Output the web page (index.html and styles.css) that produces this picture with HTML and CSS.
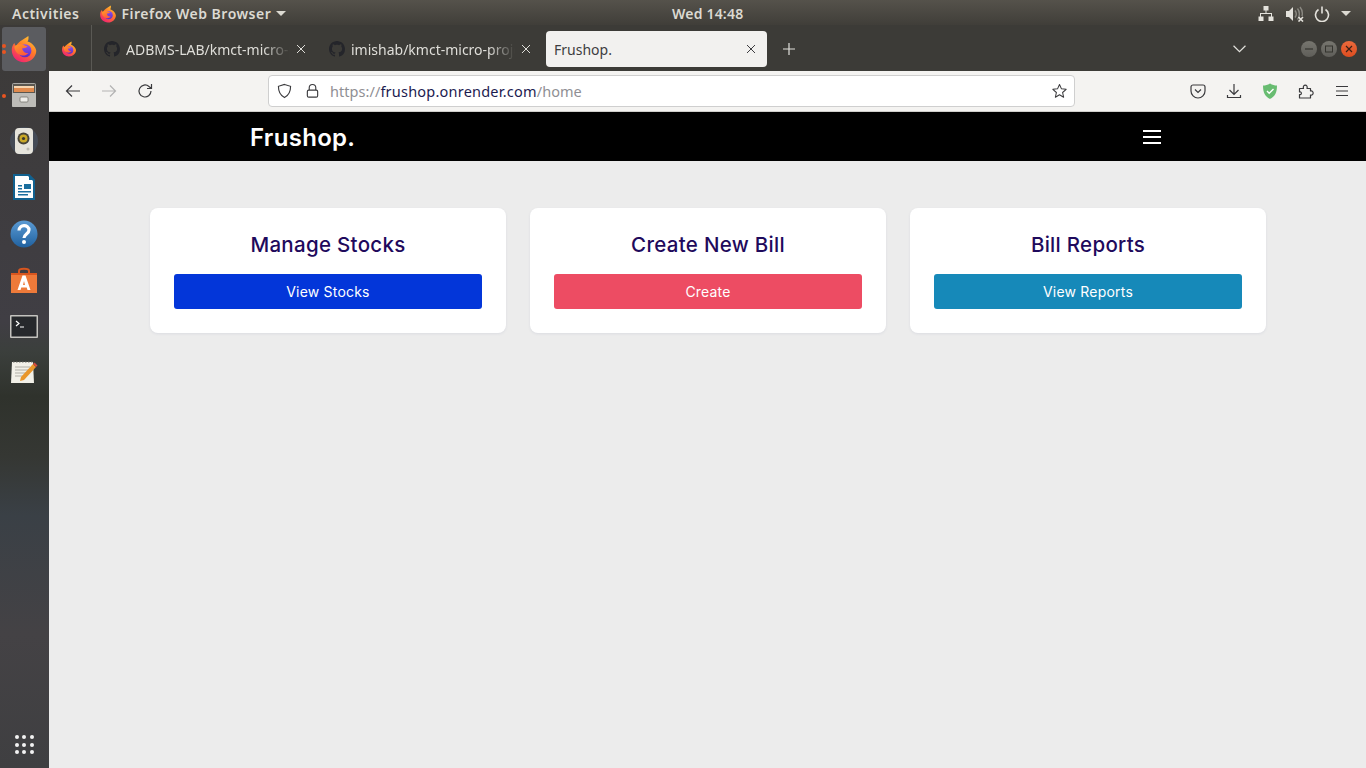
FILE: index.html
```html
<!DOCTYPE html>
<html lang="en">
<head>
<meta charset="utf-8">
<title>Frushop.</title>
<link rel="stylesheet" href="styles.css">
</head>
<body>
<svg class="defs" width="0" height="0" aria-hidden="true">
  <defs>
    <linearGradient id="ffa" x1="0.8" y1="0.05" x2="0.25" y2="0.95"><stop offset="0" stop-color="#ffc233"/><stop offset="0.45" stop-color="#ff7a28"/><stop offset="1" stop-color="#f2256f"/></linearGradient>
    <linearGradient id="ffb" x1="0.5" y1="0" x2="0.5" y2="1"><stop offset="0" stop-color="#8f52ec"/><stop offset="1" stop-color="#5b2cc6"/></linearGradient>
    <linearGradient id="ffc" x1="0" y1="0" x2="0.6" y2="1"><stop offset="0" stop-color="#ff9b26"/><stop offset="1" stop-color="#ff5a3c"/></linearGradient>
    <symbol id="ff" viewBox="0 0 32 32">
      <path fill="url(#ffa)" d="M21 1c.5 3 0 5-1 6.500C25 9 29 13 30 18c0 7-6 13-14 13S2 25 2 17c0-3 1-6 3-8 .5 1.500 1 2.500 2 3.500C9 8 14 5.500 21 1z"/>
      <circle cx="17" cy="18" r="7.500" fill="url(#ffb)"/>
      <path fill="url(#ffc)" d="M5 13c3-2.500 7-3 10-2 2 .7 3 1.600 5 1.600-1 2-3.500 3-6 2.400 0 3 3 6 7 5.500-2.500 3-7.500 4-11 1.500-3-2-5-5-5-9z"/>
    </symbol>
    <symbol id="gh" viewBox="0 0 16 16">
      <path fill="#24252a" d="M8 0C3.580 0 0 3.580 0 8c0 3.540 2.290 6.530 5.470 7.590.4.070.55-.17.55-.38 0-.19-.01-.82-.01-1.490-2.010.37-2.530-.49-2.690-.94-.09-.23-.48-.94-.82-1.130-.28-.15-.68-.52-.01-.53.63-.01 1.080.58 1.230.82.720 1.210 1.870.87 2.330.66.070-.52.280-.87.510-1.070-1.780-.2-3.640-.89-3.640-3.950 0-.87.310-1.590.820-2.150-.08-.2-.36-1.020.08-2.120 0 0 .67-.21 2.200.82.640-.18 1.320-.27 2-.27s1.360.09 2 .27c1.530-1.040 2.200-.82 2.200-.82.440 1.100.16 1.920.08 2.120.51.560.82 1.270.82 2.150 0 3.070-1.870 3.750-3.650 3.950.29.250.54.730.54 1.480 0 1.070-.01 1.930-.01 2.200 0 .21.150.46.550.38A8.010 8.010 0 0 0 16 8c0-4.420-3.580-8-8-8z"/>
    </symbol>
    <symbol id="x" viewBox="0 0 10 10"><path d="M1 1l8 8M9 1l-8 8" fill="none" stroke="currentColor" stroke-width="1"/></symbol>
  </defs>
</svg>

<header class="topbar">
  <div class="top-left">
    <span class="activities">Activities</span>
    <span class="app-menu">
      <svg class="ico-18"><use href="#ff"/></svg>
      <span>Firefox Web Browser</span>
      <i class="caret"></i>
    </span>
  </div>
  <div class="clock">Wed 14:48</div>
  <div class="tray">
    <svg class="tray-ico net" viewBox="0 0 16 16"><path fill="#e4e2dc" d="M5.500 0h5v4.500h-2V7H14v3.500h1.500V15H10.500v-4.500H13V8H3v2.500h2.500V15H.500v-4.500H2V7h5.500V4.500h-2z"/></svg>
    <svg class="tray-ico sound" viewBox="0 0 18 16"><path fill="#e4e2dc" d="M0 5h3l4-4v14l-4-4H0z"/><path fill="none" stroke="#8b8982" stroke-width="1.400" d="M9 4.500c1.500 2 1.500 5 0 7M11.500 2.500c2.500 3 2.500 8 0 11M14 1c2.500 3 2.500 7 2 9"/><path stroke="#e4e2dc" stroke-width="1.600" d="M12.500 11l4.500 4.500M17 11l-4.500 4.500"/></svg>
    <svg class="tray-ico" viewBox="0 0 16 16"><path fill="none" stroke="#e4e2dc" stroke-width="1.600" d="M4.500 3.500a6.500 6.500 0 1 0 7 0M8 .5v7"/></svg>
    <i class="caret"></i>
  </div>
</header>

<div class="desktop">
  <nav class="dock">
    <div class="dock-list">
      <div class="dock-item active"><i class="pip one"></i><i class="pip two"></i><svg class="dock-ico"><use href="#ff"/></svg></div>
      <div class="dock-item"><i class="pip single"></i>
        <svg class="dock-ico" viewBox="0 0 28 28"><rect x="2" y="2" width="24" height="24" rx="2" fill="#a9a8a4"/><rect x="3" y="3" width="22" height="9" fill="#5b5750"/><rect x="4" y="5" width="20" height="6" fill="#e08a4e"/><rect x="4" y="5" width="20" height="2" fill="#f6d5b0"/><rect x="2" y="12" width="24" height="14" rx="1" fill="#bdbcb8"/><rect x="10" y="16" width="8" height="5" rx="1" fill="#efeeea" stroke="#77756f" stroke-width=".8"/></svg>
      </div>
      <div class="dock-item">
        <svg class="dock-ico" viewBox="0 0 28 28"><circle cx="14" cy="14" r="14" fill="#4a5568" opacity=".6"/><rect x="5" y="1" width="18" height="26" rx="4" fill="#e6e4dc"/><circle cx="13.500" cy="11.500" r="6" fill="#47443a"/><circle cx="13.500" cy="11.500" r="4" fill="#c9a827"/><circle cx="13.500" cy="11.500" r="1.600" fill="#3a382f"/><circle cx="18" cy="22" r="1.500" fill="#bcbab2"/></svg>
      </div>
      <div class="dock-item">
        <svg class="dock-ico" viewBox="0 0 28 28"><path fill="#11618f" d="M3 1h16l6 6v20H3z"/><path fill="#fff" d="M5 3h13l5 5v17H5z"/><path fill="#11618f" d="M19 1l6 6h-6z"/><path fill="#1a6e9e" d="M8 12h4v1.500H8zM8 15h4v1.500H8zM14 11h7v5h-7zM8 18h13v1.500H8zM8 21h10v1.500H8z"/></svg>
      </div>
      <div class="dock-item">
        <svg class="dock-ico" viewBox="0 0 28 28"><defs><linearGradient id="hb" x1="0" y1="0" x2="0" y2="1"><stop offset="0" stop-color="#5b9bd4"/><stop offset="1" stop-color="#20619f"/></linearGradient></defs><circle cx="14" cy="14" r="13.500" fill="url(#hb)"/><path fill="none" stroke="#fff" stroke-width="3.200" d="M9 10.500c0-6.500 10-6.500 10-.5 0 4-5 4-5 8"/><circle cx="14" cy="22" r="2" fill="#fff"/></svg>
      </div>
      <div class="dock-item">
        <svg class="dock-ico" viewBox="0 0 28 28"><path fill="none" stroke="#d8561f" stroke-width="2" d="M9 8V5c0-3 10-3 10 0v3"/><path fill="#ee7a3a" d="M1 7h26v20H1z"/><path fill="#d8561f" d="M1 7h26v2H1z"/><path fill="#fff" d="M12.500 9.500h3L20.500 24h-3l-.8-2.500h-5.400L10.500 24h-3zM13 19h2l-1-4z"/></svg>
      </div>
      <div class="dock-item">
        <svg class="dock-ico" viewBox="0 0 28 28"><rect x="0" y="3" width="28" height="23" rx="1" fill="#c4c3bf"/><rect x="1.500" y="4.500" width="25" height="20" fill="#26282c"/><path fill="none" stroke="#fff" stroke-width="1.200" d="M6 9l3 2.500L6 14M10 15h4"/></svg>
      </div>
      <div class="dock-item">
        <svg class="dock-ico" viewBox="0 0 28 28"><path fill="#f2f0e8" d="M2 4h21l1 21H1z"/><path stroke="#6d6b66" stroke-width="1.200" stroke-dasharray="1.500 1.500" d="M3 4h20"/><path stroke="#b0aea6" d="M5 9h15M5 12h14M5 15h11M5 18h9"/><path fill="#e9962a" d="M23 6l3 3-12 13-4 1 1-4z"/><path fill="#d64a3c" d="M23 6l1.500-1.500 3 3L26 9z"/></svg>
      </div>
    </div>
    <div class="apps-grid"><i></i><i></i><i></i><i></i><i></i><i></i><i></i><i></i><i></i></div>
  </nav>

  <main class="browser">
    <div class="tabbar">
      <div class="tab pinned"><svg class="ico-16"><use href="#ff"/></svg></div>
      <div class="tab bg">
        <svg class="ico-16"><use href="#gh"/></svg>
        <span class="tab-label">ADBMS-LAB/kmct-micro-p</span>
        <svg class="tab-x"><use href="#x"/></svg>
      </div>
      <div class="tab bg">
        <svg class="ico-16"><use href="#gh"/></svg>
        <span class="tab-label">imishab/kmct-micro-proje</span>
        <svg class="tab-x"><use href="#x"/></svg>
      </div>
      <div class="tab current">
        <span class="tab-label plain">Frushop.</span>
        <svg class="tab-x"><use href="#x"/></svg>
      </div>
      <svg class="plus" viewBox="0 0 12 12"><path d="M6 0v12M0 6h12" stroke="#e2e1dc" stroke-width="1.200" fill="none"/></svg>
      <div class="tabbar-right">
        <svg class="chev" viewBox="0 0 12 7"><path d="M.5.500L6 6l5.500-5.500" fill="none" stroke="#e2e1dc" stroke-width="1.100"/></svg>
        <div class="win-btns">
          <span class="win-btn"><svg viewBox="0 0 8 8"><path d="M0 4h8" stroke="#35342f" stroke-width="1.200"/></svg></span>
          <span class="win-btn"><svg viewBox="0 0 8 8"><rect x=".5" y="1" width="7" height="6" fill="none" stroke="#35342f"/></svg></span>
          <span class="win-btn close"><svg viewBox="0 0 8 8"><path d="M1 1l6 6M7 1L1 7" stroke="#3a2016" stroke-width="1.200"/></svg></span>
        </div>
      </div>
    </div>

    <div class="toolbar">
      <div class="nav-btns">
        <svg class="tb-ico" viewBox="0 0 16 16"><path d="M15 8H1.500M7 2.500L1.500 8 7 13.500" fill="none" stroke="#3a3a3d" stroke-width="1.200"/></svg>
        <svg class="tb-ico" viewBox="0 0 16 16"><path d="M1 8h13.500M9 2.500L14.500 8 9 13.500" fill="none" stroke="#b3b3b3" stroke-width="1.200"/></svg>
        <svg class="tb-ico" viewBox="0 0 16 16"><path d="M14 8a6 6 0 1 1-2-4.500l2.500 2M14.500 1v4.500H10" fill="none" stroke="#3a3a3d" stroke-width="1.200"/></svg>
      </div>
      <div class="urlbar">
        <svg class="url-ico shield" viewBox="0 0 16 16"><path d="M8 1l6.500 2c0 6-1.500 9.500-6.500 12C3 12.500 1.500 9 1.500 3z" fill="none" stroke="#3a3a3d" stroke-width="1.200"/></svg>
        <svg class="url-ico lock" viewBox="0 0 16 16"><path d="M4.500 7V4.500a3.500 3.500 0 0 1 7 0V7" fill="none" stroke="#3a3a3d" stroke-width="1.200"/><rect x="2.500" y="7" width="11" height="7.500" rx="1.500" fill="none" stroke="#3a3a3d" stroke-width="1.200"/></svg>
        <span class="url"><span class="dim">https://</span><span class="host">frushop.onrender.com</span><span class="dim">/home</span></span>
        <svg class="url-ico star" viewBox="0 0 16 16"><path d="M8 1l2.100 4.700 5 .5-3.800 3.400 1.100 5L8 12l-4.400 2.600 1.100-5L.9 6.200l5-.5z" fill="none" stroke="#3a3a3d" stroke-width="1.100" stroke-linejoin="round"/></svg>
      </div>
      <div class="tools">
        <svg class="tb-ico" viewBox="0 0 16 16"><path d="M3 2h10a2 2 0 0 1 2 2v4a7 7 0 0 1-14 0V4a2 2 0 0 1 2-2z" fill="none" stroke="#3a3a3d" stroke-width="1.200"/><path d="M5 6.500L8 9.500l3-3" fill="none" stroke="#3a3a3d" stroke-width="1.200"/></svg>
        <svg class="tb-ico" viewBox="0 0 16 16"><path d="M8 1v10M3.500 7L8 11.500 12.500 7M1.500 12v2.500h13V12" fill="none" stroke="#3a3a3d" stroke-width="1.200"/></svg>
        <svg class="tb-ico" viewBox="0 0 16 16"><path d="M8 .5c2.500 1.500 4.500 2 7 2 0 7-2 11-7 13.500C3 13.500 1 9.500 1 2.500c2.500 0 4.500-.5 7-2z" fill="#68bc71"/><path d="M5 8l2.200 2.200L11.500 6" fill="none" stroke="#fff" stroke-width="1.400"/></svg>
        <svg class="tb-ico" viewBox="0 0 16 16"><path d="M1.500 5.500H5.500C4 1 10.500 1 9 5.500h3.500V8c3.500-1 3.500 5 0 4v3h-11v-3.500c2.500 1 2.500-3.500 0-2.500z" fill="none" stroke="#3a3a3d" stroke-width="1.200" stroke-linejoin="round"/></svg>
        <svg class="tb-ico" viewBox="0 0 16 16"><path d="M2 3.500h12M2 8h12M2 12.500h12" fill="none" stroke="#3a3a3d" stroke-width="1.200"/></svg>
      </div>
    </div>

    <div class="page">
      <div class="navbar">
        <span class="brand">Frushop.</span>
        <span class="burger"><i></i><i></i><i></i></span>
      </div>
      <div class="cards">
        <section class="card">
          <h2>Manage Stocks</h2>
          <a class="btn blue">View Stocks</a>
        </section>
        <section class="card">
          <h2>Create New Bill</h2>
          <a class="btn red">Create</a>
        </section>
        <section class="card">
          <h2>Bill Reports</h2>
          <a class="btn teal">View Reports</a>
        </section>
      </div>
    </div>
  </main>
</div>
</body>
</html>
```
FILE: styles.css
```css
* { box-sizing: border-box; }
html, body { margin: 0; height: 100%; overflow: hidden; }
body {
  width: 1366px;
  height: 768px;
  display: flex;
  flex-direction: column;
  font-family: "Noto Sans", sans-serif;
  background: #ececec;
}
.defs { position: absolute; }
i { display: block; }

/* Top bar */
.topbar {
  height: 25px;
  flex: none;
  display: grid;
  grid-template-columns: 660px auto 1fr;
  align-items: center;
  padding: 2px 12px 0;
  background: linear-gradient(#55524b, #403e39);
  color: #dcdad2;
  font-size: 14px;
  font-weight: 600;
  letter-spacing: 0.5px;
}
.top-left { display: flex; align-items: center; gap: 20px; }
.app-menu { display: flex; align-items: center; gap: 4px; }
.ico-18 { width: 18px; height: 18px; }
.caret {
  width: 0;
  height: 0;
  border-left: 5px solid transparent;
  border-right: 5px solid transparent;
  border-top: 5px solid #dcdad2;
  margin-left: 1px;
}
.clock { letter-spacing: 0.2px; }
.tray { display: flex; align-items: center; justify-content: flex-end; gap: 10px; padding-right: 3px; }
.tray-ico { width: 16px; height: 16px; }
.tray-ico.net { margin-right: 2px; }
.tray-ico.sound { width: 18px; }

/* Dock */
.desktop { flex: 1; display: flex; min-height: 0; }
.dock {
  width: 49px;
  flex: none;
  display: flex;
  flex-direction: column;
  justify-content: space-between;
  align-items: center;
  padding: 2px 1px 14px 0;
  background: linear-gradient(#3c3a38 0, #403e44 40%, #3b3f3c 44%, #2f322c 50%, #353733 58%, #3a4046 66%, #444245 82%, #3f3f41 100%);
}
.dock-list { display: flex; flex-direction: column; gap: 2.14px; align-items: center; }
.dock-item {
  position: relative;
  width: 44px;
  height: 44px;
  display: flex;
  align-items: center;
  justify-content: center;
  border-radius: 3px;
}
.dock-item.active { background: #5b5c60; }
.dock-ico { width: 28px; height: 28px; }
.pip {
  position: absolute;
  left: 0;
  width: 4px;
  height: 4px;
  border-radius: 50%;
  background: #e95420;
}
.pip.one { top: 17px; }
.pip.two { top: 23px; }
.pip.single { top: 21px; }
.apps-grid {
  display: grid;
  grid-template-columns: repeat(3, 4px);
  gap: 3.500px;
}
.apps-grid i { width: 4px; height: 4px; border-radius: 50%; background: #f2f2f2; }

/* Browser */
.browser { flex: 1; min-width: 0; display: flex; flex-direction: column; }
.tabbar {
  height: 46px;
  flex: none;
  display: flex;
  align-items: center;
  background: #3c3b37;
  color: #dfded9;
  font-size: 14px;
}
.tab { height: 36px; display: flex; align-items: center; margin-top: 2px; }
.pinned {
  width: 43px;
  height: 46px;
  margin-top: 0;
  padding: 2px 0 0 12px;
  border-right: 1px solid #5a5954;
}
.ico-16 { width: 16px; height: 16px; flex: none; }
.tab.bg { width: 225px; padding: 0 11px 0 12px; gap: 6px; }
.tab-label {
  flex: 1;
  min-width: 0;
  white-space: nowrap;
  -webkit-mask-image: linear-gradient(to right, #000 84%, transparent 100%);
  mask-image: linear-gradient(to right, #000 84%, transparent 100%);
}
.tab-label.plain { -webkit-mask-image: none; mask-image: none; }
.tab-x { width: 10px; height: 10px; flex: none; color: #dfded9; }
.tab.current {
  width: 221px;
  margin-left: 4px;
  padding: 0 11px 0 8px;
  background: #f2f1ef;
  color: #3d3d40;
  border-radius: 4px;
}
.current .tab-x { color: #3d3d40; }
.plus { width: 12px; height: 12px; margin: 2px 0 0 16px; }
.tabbar-right {
  flex: 1;
  display: flex;
  align-items: center;
  justify-content: flex-end;
  padding: 2px 9px 0 0;
  gap: 55px;
}
.chev { width: 13px; height: 8px; }
.win-btns { display: flex; gap: 4px; }
.win-btn {
  width: 16px;
  height: 16px;
  border-radius: 50%;
  background: linear-gradient(#77766f, #5f5e59);
  display: flex;
  align-items: center;
  justify-content: center;
}
.win-btn svg { width: 8px; height: 8px; }
.win-btn.close { background: linear-gradient(#ec6a3c, #dd4d20); }

/* Toolbar */
.toolbar {
  height: 41px;
  flex: none;
  display: flex;
  align-items: center;
  background: #f4f3f1;
  border-bottom: 1px solid #cfcecb;
  padding: 0 16px;
}
.tb-ico { width: 16px; height: 16px; flex: none; }
.nav-btns { display: flex; gap: 20px; margin-right: 115px; flex: none; }
.urlbar {
  width: 807px;
  flex: none;
  height: 32px;
  display: flex;
  align-items: center;
  background: #fff;
  border: 1px solid #cfcfcf;
  border-radius: 4px;
  padding: 0 7px 0 8px;
  font-size: 14.500px;
  color: #1c1b50;
}
.url-ico { width: 15px; height: 16px; flex: none; }
.lock { margin-left: 13px; }
.url { flex: 1; margin-left: 10px; white-space: nowrap; }
.host { letter-spacing: 0.22px; }
.dim { color: #8f8f94; letter-spacing: 0.05px; }
.tools { display: flex; gap: 20px; margin-left: 115px; flex: none; }

/* Page */
.page { flex: 1; min-height: 0; display: flex; flex-direction: column; background: #ececec; }
.navbar {
  height: 49px;
  flex: none;
  background: #000;
  display: flex;
  align-items: center;
  justify-content: space-between;
  padding: 0 205px 0 201px;
}
.brand {
  font-family: Inter, sans-serif;
  color: #fff;
  font-size: 24px;
  font-weight: 600;
  letter-spacing: 0.3px;
  padding-top: 2px;
}
.burger { display: flex; flex-direction: column; gap: 4px; width: 18px; }
.burger i { height: 2px; background: #fff; }
.cards {
  display: grid;
  grid-template-columns: repeat(3, 356px);
  gap: 24px;
  padding: 47px 0 0 101px;
}
.card {
  height: 125px;
  background: #fff;
  border-radius: 8px;
  box-shadow: 0 1px 3px rgba(40, 50, 120, 0.08);
  padding: 24px;
  display: flex;
  flex-direction: column;
  align-items: stretch;
}
.card h2 {
  margin: 0;
  height: 26px;
  line-height: 26px;
  text-align: center;
  font-family: Inter, sans-serif;
  font-size: 20.500px;
  font-weight: 500;
  letter-spacing: 0.3px;
  color: #1f0a5c;
}
.btn {
  margin-top: 16px;
  height: 35px;
  border-radius: 3px;
  display: flex;
  align-items: center;
  justify-content: center;
  color: #fff;
  font-family: Inter, sans-serif;
  font-size: 14px;
  font-weight: 400;
  letter-spacing: 0.2px;
}
.blue { background: #0336d9; }
.red { background: #ed4c63; }
.teal { background: #1689b9; }
```
